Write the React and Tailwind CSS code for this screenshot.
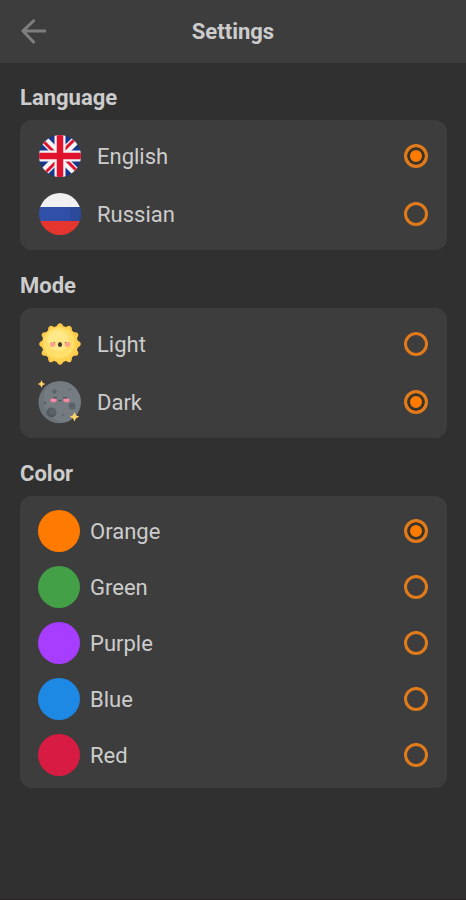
import { useId, useState } from 'react';

const languages = [
  { value: 'en', label: 'English', icon: <UkFlag /> },
  { value: 'ru', label: 'Russian', icon: <RussianFlag /> },
];

const modes = [
  { value: 'light', label: 'Light', icon: <Sun /> },
  { value: 'dark', label: 'Dark', icon: <Moon /> },
];

const colors = [
  { value: 'orange', label: 'Orange', swatch: 'bg-[#ff7a00]' },
  { value: 'green', label: 'Green', swatch: 'bg-[#43a047]' },
  { value: 'purple', label: 'Purple', swatch: 'bg-[#a63dff]' },
  { value: 'blue', label: 'Blue', swatch: 'bg-[#1e88e5]' },
  { value: 'red', label: 'Red', swatch: 'bg-[#d81b43]' },
];

function UkFlag() {
  const clip = useId();

  return (
    <svg viewBox="0 0 42 42" className="size-[42px] shrink-0" aria-hidden="true">
      <clipPath id={clip}>
        <circle cx="21" cy="21" r="21" />
      </clipPath>
      <g clipPath={`url(#${clip})`}>
        <rect width="42" height="42" fill="#17358b" />
        <path d="M3 3l36 36M39 3L3 39" stroke="#f4f4f6" strokeWidth="8.500" />
        <path
          d="M3.500 5.500l13 13M38.500 36.500l-13-13M36.500 3.500l-13 13M5.500 38.500l13-13"
          stroke="#e0122c"
          strokeWidth="3"
        />
        <path d="M21 0v42M0 21h42" stroke="#f4f4f6" strokeWidth="11" />
        <path d="M21 0v42M0 21h42" stroke="#e0122c" strokeWidth="6.500" />
      </g>
    </svg>
  );
}

function RussianFlag() {
  const clip = useId();

  return (
    <svg viewBox="0 0 42 42" className="size-[42px] shrink-0" aria-hidden="true">
      <clipPath id={clip}>
        <circle cx="21" cy="21" r="21" />
      </clipPath>
      <g clipPath={`url(#${clip})`}>
        <rect width="42" height="15" fill="#f1f1f1" />
        <rect y="14" width="42" height="15" fill="#2f4fa8" />
        <rect x="31" y="14" width="11" height="15" fill="#2b4a9a" />
        <rect y="28" width="42" height="14" fill="#e5352f" />
      </g>
    </svg>
  );
}

const rays = [0, 30, 60, 90, 120, 150, 180, 210, 240, 270, 300, 330];

function Sun() {
  return (
    <svg viewBox="0 0 42 42" className="size-[42px] shrink-0" aria-hidden="true">
      {rays.map((angle) => (
        <path
          key={angle}
          d="M15.500 4.500Q18 3.800 18.600 1.500Q21 -1.200 23.400 1.500Q24 3.800 26.500 4.500L21 21Z"
          fill="#fbc94a"
          transform={`rotate(${angle} 21 21)`}
        />
      ))}
      <circle cx="21" cy="21" r="18" fill="#fdd050" />
      <circle cx="20" cy="20" r="15.500" fill="#ffdf6a" />
      <circle cx="19" cy="17.500" r="10.500" fill="#ffe888" />
      <ellipse cx="13.500" cy="21.500" rx="2.800" ry="2.400" fill="#ffa58a" />
      <ellipse cx="28.500" cy="21.500" rx="2.800" ry="2.400" fill="#ffa58a" />
      <circle cx="15.500" cy="19.500" r=".8" fill="#a5834f" />
      <circle cx="26.500" cy="19.500" r=".8" fill="#a5834f" />
      <ellipse cx="21" cy="21.500" rx="2.100" ry="2.600" fill="#463a35" />
    </svg>
  );
}

function Moon() {
  return (
    <svg viewBox="0 0 42 42" className="size-[42px] shrink-0 overflow-visible" aria-hidden="true">
      <circle cx="21" cy="21" r="21" fill="#747c82" />
      <path d="M11 2.500a21 21 0 0 0 15 39A23 23 0 0 1 11 2.500z" fill="#6c747a" />
      <circle cx="15.500" cy="10.500" r="2.200" fill="#5c6369" />
      <circle cx="6" cy="22" r="1.400" fill="#5c6369" />
      <circle cx="31" cy="8.500" r="1.200" fill="#646b71" />
      <circle cx="12.500" cy="31.500" r="5" fill="#51585e" />
      <circle cx="13.500" cy="30.500" r="3.500" fill="#5a6167" />
      <circle cx="33" cy="25" r="3.500" fill="#5a6167" />
      <circle cx="24" cy="34" r="1.300" fill="#636a70" />
      <ellipse cx="14.500" cy="19.300" rx="3" ry="2" fill="#f987a3" />
      <ellipse cx="27.500" cy="19.300" rx="3" ry="2" fill="#f987a3" />
      <path
        d="M14 16.500q1.800 1.500 3.600 0M24.500 16.500q1.800 1.500 3.600 0M20 19.500q1 1 2 0"
        fill="none"
        stroke="#3f444a"
        strokeWidth="1"
        strokeLinecap="round"
      />
      <path d="M2.500 -.8l1.200 2.600 2.600 1.200-2.600 1.200-1.200 2.600-1.200-2.600-2.600-1.200 2.600-1.200z" fill="#ffd166" />
      <path d="M35.500 31l1.500 3.300 3.300 1.500-3.300 1.500-1.500 3.300-1.500-3.300-3.300-1.500 3.300-1.500z" fill="#ffd166" />
    </svg>
  );
}

function Radio({ name, value, checked, onChange }) {
  return (
    <input
      type="radio"
      name={name}
      value={value}
      checked={checked}
      onChange={onChange}
      className="size-6 shrink-0 cursor-pointer appearance-none rounded-full border-3 border-[#e07a1a] checked:bg-[#ff7a00] checked:shadow-[inset_0_0_0_3px_#36342c]"
    />
  );
}

function Section({ title, className, children }) {
  return (
    <fieldset className="mb-[21px]">
      <legend className="mb-[7px] text-[22px] leading-[30px] font-bold">{title}</legend>
      <div className={`rounded-xl bg-[#3d3d3d] pr-[19px] ${className}`}>{children}</div>
    </fieldset>
  );
}

export default function App() {
  const [language, setLanguage] = useState('en');
  const [mode, setMode] = useState('dark');
  const [color, setColor] = useState('orange');

  return (
    <div className="min-h-screen border-b border-[#2a2024] bg-[#303030] font-['Roboto',sans-serif] text-[#cccccc]">
      <header className="grid h-[63px] grid-cols-[48px_1fr_48px] items-center bg-[#3d3d3d] px-2.5">
        <button type="button" aria-label="Back" className="flex size-12 items-center justify-center">
          <svg
            viewBox="0 0 26 26"
            className="size-[26px]"
            fill="none"
            stroke="#7e7e7e"
            strokeWidth="3"
          >
            <path d="M25 12H2M13.500 1L2 12l11.500 12" />
          </svg>
        </button>
        <h1 className="text-center text-[22px] leading-[30px] font-bold">Settings</h1>
      </header>

      <main className="pt-5 pr-[19px] pl-5">
        <Section title="Language" className="py-[7px] pl-[19px]">
          {languages.map((item) => (
            <label key={item.value} className="flex h-[58px] items-center gap-4">
              {item.icon}
              <span className="flex-1 text-[22px]">{item.label}</span>
              <Radio
                name="language"
                value={item.value}
                checked={language === item.value}
                onChange={() => setLanguage(item.value)}
              />
            </label>
          ))}
        </Section>

        <Section title="Mode" className="py-[7px] pl-[19px]">
          {modes.map((item) => (
            <label key={item.value} className="flex h-[58px] items-center gap-4">
              {item.icon}
              <span className="flex-1 text-[22px]">{item.label}</span>
              <Radio
                name="mode"
                value={item.value}
                checked={mode === item.value}
                onChange={() => setMode(item.value)}
              />
            </label>
          ))}
        </Section>

        <Section title="Color" className="pt-[7px] pb-[5px] pl-[18px]">
          {colors.map((item) => (
            <label key={item.value} className="flex h-14 items-center gap-2.5">
              <span className={`size-[42px] shrink-0 rounded-full ${item.swatch}`} />
              <span className="flex-1 text-[22px]">{item.label}</span>
              <Radio
                name="color"
                value={item.value}
                checked={color === item.value}
                onChange={() => setColor(item.value)}
              />
            </label>
          ))}
        </Section>
      </main>
    </div>
  );
}
